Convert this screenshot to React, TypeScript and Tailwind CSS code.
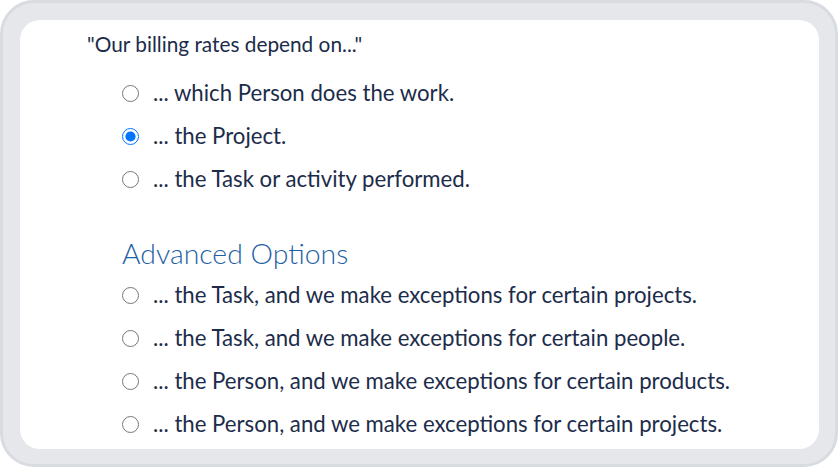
import React from "react";

const basic = [
  { label: "... which Person does the work.", checked: false },
  { label: "... the Project.", checked: true },
  { label: "... the Task or activity performed.", checked: false },
];
const advanced = [
  "... the Task, and we make exceptions for certain projects.",
  "... the Task, and we make exceptions for certain people.",
  "... the Person, and we make exceptions for certain products.",
  "... the Person, and we make exceptions for certain projects.",
];

function Row({ label, checked }: { label: string; checked: boolean }) {
  return (
    <label className="flex h-[43px] items-center gap-[14px]">
      <input
        type="radio"
        name="rate"
        defaultChecked={checked}
        className="m-0 h-[17px] w-[17px] shrink-0 accent-[#0075ff]"
      />
      <span className="text-[22.2px] leading-none text-[#1c2c4a]">{label}</span>
    </label>
  );
}

export default function App() {
  return (
    <div className="h-[470px] w-[840px] bg-white" style={{ fontFamily: "Lato, 'Noto Sans', sans-serif" }}>
      <div className="h-[467px] w-[838px] rounded-[34px] border-[3px] border-[#d8dbe0] bg-[#e5e7eb] p-[17px]">
        <div className="h-[429px] w-[799px] rounded-[20px] bg-white pl-[67px] pt-[12px]">
          <div className="text-[20.8px] leading-[24px] text-[#1c2c4a]">"Our billing rates depend on..."</div>
          <div className="pl-[35px] pt-[16px]">
            {basic.map((o) => (
              <Row key={o.label} label={o.label} checked={o.checked} />
            ))}
            <div className="pt-[36px] text-[28.4px] font-light leading-[32px] text-[#1f5fa5]">Advanced Options</div>
            <div className="pt-[5px]">
              {advanced.map((l) => (
                <Row key={l} label={l} checked={false} />
              ))}
            </div>
          </div>
        </div>
      </div>
    </div>
  );
}
